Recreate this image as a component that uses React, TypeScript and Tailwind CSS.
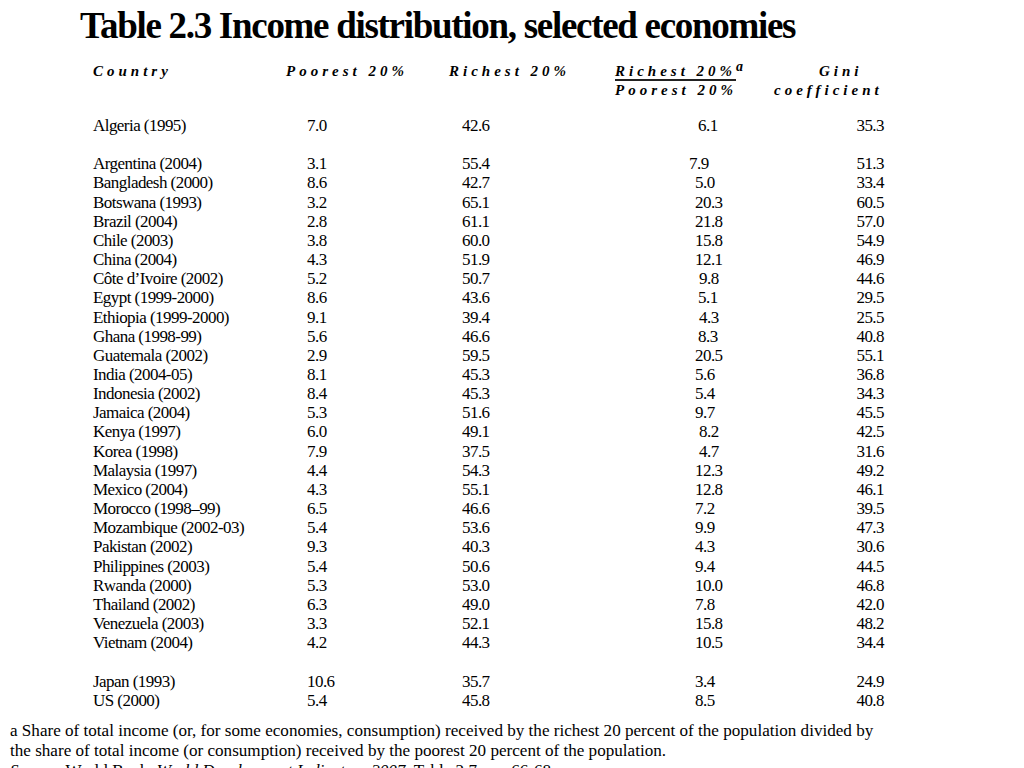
import React from "react";

type Row = [string, string, string, string, string, number] | null;

const rows: Row[] = [
  ["Algeria (1995)", "7.0", "42.6", "6.1", "35.3", 9],
  null,
  ["Argentina (2004)", "3.1", "55.4", "7.9", "51.3", 0],
  ["Bangladesh (2000)", "8.6", "42.7", "5.0", "33.4", 6],
  ["Botswana (1993)", "3.2", "65.1", "20.3", "60.5", 6],
  ["Brazil (2004)", "2.8", "61.1", "21.8", "57.0", 6],
  ["Chile (2003)", "3.8", "60.0", "15.8", "54.9", 6],
  ["China (2004)", "4.3", "51.9", "12.1", "46.9", 6],
  ["Côte d’Ivoire (2002)", "5.2", "50.7", "9.8", "44.6", 10],
  ["Egypt (1999-2000)", "8.6", "43.6", "5.1", "29.5", 9],
  ["Ethiopia (1999-2000)", "9.1", "39.4", "4.3", "25.5", 10],
  ["Ghana (1998-99)", "5.6", "46.6", "8.3", "40.8", 9],
  ["Guatemala (2002)", "2.9", "59.5", "20.5", "55.1", 6],
  ["India (2004-05)", "8.1", "45.3", "5.6", "36.8", 6],
  ["Indonesia (2002)", "8.4", "45.3", "5.4", "34.3", 6],
  ["Jamaica (2004)", "5.3", "51.6", "9.7", "45.5", 6],
  ["Kenya (1997)", "6.0", "49.1", "8.2", "42.5", 10],
  ["Korea (1998)", "7.9", "37.5", "4.7", "31.6", 10],
  ["Malaysia (1997)", "4.4", "54.3", "12.3", "49.2", 6],
  ["Mexico (2004)", "4.3", "55.1", "12.8", "46.1", 6],
  ["Morocco (1998–99)", "6.5", "46.6", "7.2", "39.5", 6],
  ["Mozambique (2002-03)", "5.4", "53.6", "9.9", "47.3", 6],
  ["Pakistan (2002)", "9.3", "40.3", "4.3", "30.6", 6],
  ["Philippines (2003)", "5.4", "50.6", "9.4", "44.5", 6],
  ["Rwanda (2000)", "5.3", "53.0", "10.0", "46.8", 6],
  ["Thailand (2002)", "6.3", "49.0", "7.8", "42.0", 6],
  ["Venezuela (2003)", "3.3", "52.1", "15.8", "48.2", 6],
  ["Vietnam (2004)", "4.2", "44.3", "10.5", "34.4", 6],
  null,
  ["Japan (1993)", "10.6", "35.7", "3.4", "24.9", 6],
  ["US (2000)", "5.4", "45.8", "8.5", "40.8", 6],
];

// ratio column sits a little unevenly in the original slide
const ratioPad: Record<number, string> = {
  0: "pl-0",
  6: "pl-[6px]",
  9: "pl-[9px]",
  10: "pl-[10px]",
};

const head = "font-bold italic text-[15px] tracking-[4px] leading-[19px] whitespace-nowrap";

export default function App() {
  return (
    <div className="w-[1024px] h-[768px] overflow-hidden bg-white text-black font-['Liberation_Serif','Times_New_Roman',serif]">
      <h1 className="pl-[80px] pt-[7px] text-[37px] leading-[37px] font-bold tracking-[-0.035em] whitespace-nowrap">
        Table 2.3 Income distribution, selected economies
      </h1>

      {/* header */}
      <div className="mt-[18px] pl-[93px] flex">
        <div className={`w-[193px] ${head}`}>Country</div>
        <div className={`w-[163px] ${head}`}>Poorest 20%</div>
        <div className={`w-[166px] ${head}`}>Richest 20%</div>
        <div className="w-[159px] flex flex-col">
          <div className={head}>
            <span className="border-b-2 border-[#222]">Richest 20%</span>
            <span className="relative -top-[5px] text-[14px] tracking-normal">a</span>
          </div>
          <div className={head}>Poorest 20%</div>
        </div>
        <div className="flex flex-col">
          <div className={`${head} pl-[45px]`}>Gini</div>
          <div className={head}>coefficient</div>
        </div>
      </div>

      {/* body */}
      <div className="mt-[16px] flex flex-col text-[17px] leading-[19.15px] tracking-[-0.032em]">
        {rows.map((r, i) =>
          r === null ? (
            <div key={i} className="h-[19.15px]" />
          ) : (
            <div key={i} className="pl-[93px] flex whitespace-nowrap">
              <div className="w-[214px]">{r[0]}</div>
              <div className="w-[155px]">{r[1]}</div>
              <div className="w-[227px]">{r[2]}</div>
              <div className={`w-[120px] ${ratioPad[r[5]]}`}>{r[3]}</div>
              <div className="w-[75px] text-right">{r[4]}</div>
            </div>
          )
        )}
      </div>

      {/* notes */}
      <div className="mt-[11px] pl-[10px] pr-[10px] text-[17.1px] leading-[20px] whitespace-nowrap">
        <p>
          a Share of total income (or, for some economies, consumption) received by the richest 20 percent of the population divided by
          <br />
          the share of total income (or consumption) received by the poorest 20 percent of the population.
        </p>
        <p>
          <i>Source</i>: World Bank, <i>World Development Indicators 2007</i>, Table 2.7, pp. 66-68.
        </p>
      </div>
    </div>
  );
}
